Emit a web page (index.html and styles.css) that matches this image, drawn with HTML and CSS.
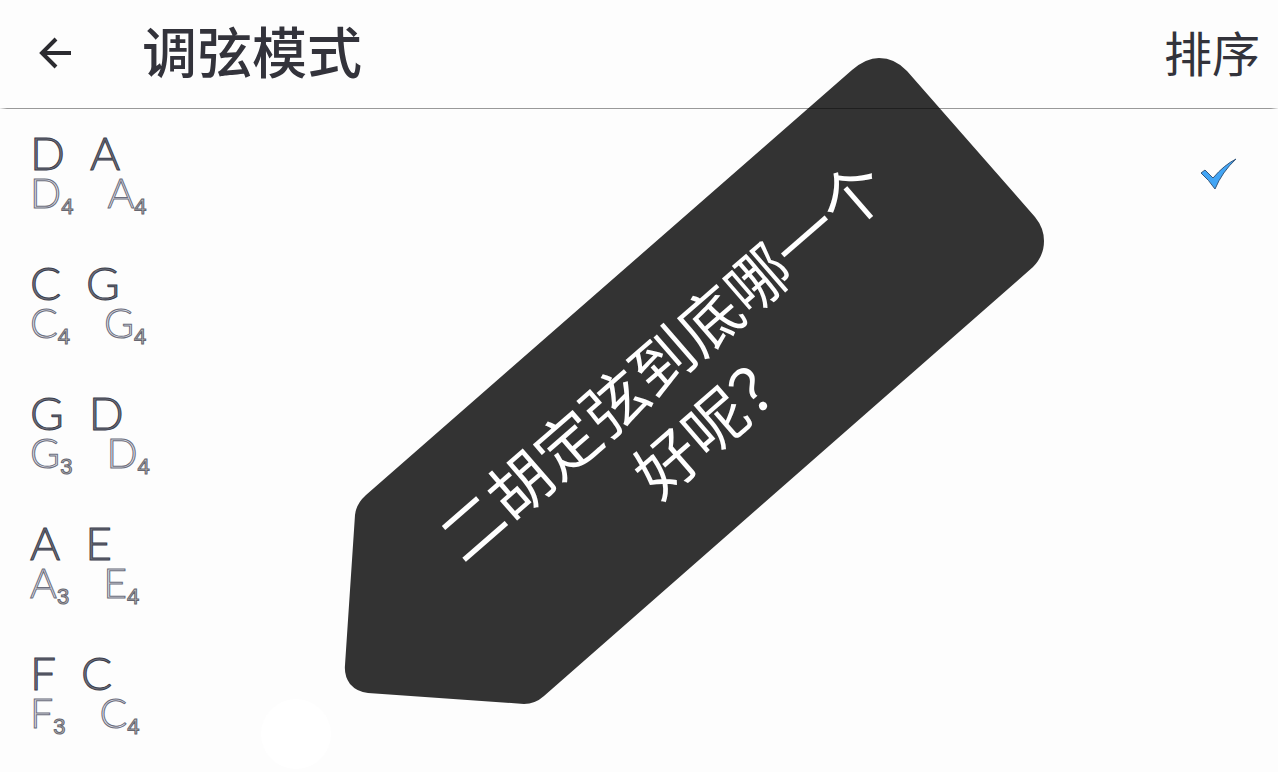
FILE: index.html
```
<!DOCTYPE html>
<html lang="zh-CN">
<head>
  <meta charset="UTF-8">
  <meta name="viewport" content="width=device-width, initial-scale=1">
  <title>调弦模式</title>
  <link rel="stylesheet" href="styles.css">
</head>
<body>

  <header class="topbar">
    <button class="back" type="button" aria-label="返回">
      <svg width="34" height="32" viewBox="0 0 34 32">
        <path d="M33 16H4M18 2L4 16L18 30" />
      </svg>
    </button>
    <h1>调弦模式</h1>
    <button class="sort" type="button">排序</button>
  </header>

  <main class="tunings">
    <label class="tuning">
      <span class="info">
        <span class="keys"><span>D</span><span>A</span></span>
        <span class="notes"><span>D<sub>4</sub></span><span>A<sub>4</sub></span></span>
      </span>
      <input type="radio" name="tuning" checked>
      <svg class="tick" width="38" height="34" viewBox="0 0 38 34">
        <path d="M1 16L5 13L13 21Q24 8 36 2Q22 15 15 32Q9 23 1 16Z" />
      </svg>
    </label>
    <label class="tuning">
      <span class="info">
        <span class="keys"><span>C</span><span>G</span></span>
        <span class="notes"><span>C<sub>4</sub></span><span>G<sub>4</sub></span></span>
      </span>
      <input type="radio" name="tuning">
    </label>
    <label class="tuning">
      <span class="info">
        <span class="keys"><span>G</span><span>D</span></span>
        <span class="notes"><span>G<sub>3</sub></span><span>D<sub>4</sub></span></span>
      </span>
      <input type="radio" name="tuning">
    </label>
    <label class="tuning">
      <span class="info">
        <span class="keys"><span>A</span><span>E</span></span>
        <span class="notes"><span>A<sub>3</sub></span><span>E<sub>4</sub></span></span>
      </span>
      <input type="radio" name="tuning">
    </label>
    <label class="tuning">
      <span class="info">
        <span class="keys"><span>F</span><span>C</span></span>
        <span class="notes"><span>F<sub>3</sub></span><span>C<sub>4</sub></span></span>
      </span>
      <input type="radio" name="tuning">
    </label>
  </main>

  <div class="dot"></div>

  <div class="callout">
    <svg width="702" height="650" viewBox="0 0 702 650">
      <path d="M22 439L508 14Q522 2 535 2Q551 2 563 15L691 161Q700 172 700 185Q700 200 689 211L200 640Q191 648 180 648L24 637Q13 636 6 628Q0 620 1 609L11 459Q12 448 22 439Z" />
    </svg>
    <p>二胡定弦到底哪一个<br>好呢？</p>
  </div>

</body>
</html>
```
FILE: styles.css
```
* { box-sizing: border-box; }
body {
  margin: 0;
  min-height: 100vh;
  position: relative;
  overflow: hidden;
  background: #fdfdfd;
  color: #33333b;
  font-family: "Noto Sans CJK SC", sans-serif;
}
button {
  padding: 0;
  border: none;
  background: none;
  color: inherit;
  font-family: inherit;
  cursor: pointer;
}

.topbar {
  display: flex;
  align-items: center;
  height: 109px;
  padding: 0 18px 2px 38px;
  border-bottom: 1px solid;
  border-image: linear-gradient(to right, transparent, #999 8px, #999 calc(100% - 8px), transparent) 1;
}
.back {
  display: flex;
  margin-right: 70px;
}
.back path {
  fill: none;
  stroke: #2b2b30;
  stroke-width: 4;
}
h1 {
  margin: 0;
  padding-bottom: 8px;
  font-size: 55px;
  font-weight: 500;
  line-height: 80px;
}
.sort {
  margin-left: auto;
  padding-bottom: 4px;
  font-size: 48px;
  line-height: 80px;
}

.tuning {
  display: flex;
  align-items: center;
  justify-content: space-between;
  height: 130px;
  padding: 0 40px 0 30px;
  cursor: pointer;
}
.tuning input {
  appearance: none;
  width: 0;
  margin: 0 0 0 auto;
}
.info {
  font-family: Lato, sans-serif;
  font-weight: 300;
}
.keys, .notes {
  display: flex;
  line-height: 40px;
}
.keys {
  gap: 25px;
  padding-top: 2px;
  color: #70737f;
  font-size: 46px;
  -webkit-text-stroke: 1px #3a3c4a;
}
.notes {
  gap: 34px;
  color: #e4e5ee;
  font-size: 41px;
  -webkit-text-stroke: 1px #6b6d7c;
}
sub {
  font: 22px/1 "Liberation Sans", sans-serif;
  vertical-align: -6px;
  color: #bbb;
  -webkit-text-stroke: 1px #666670;
}
.tick path {
  fill: #42a5f5;
  stroke: #34577c;
}

.dot {
  position: absolute;
  left: 261px;
  bottom: 3px;
  width: 70px;
  height: 70px;
  border-radius: 50%;
  background: #fff;
}

/* slanted speech label over the list */
.callout {
  position: absolute;
  left: 344px;
  top: 56px;
  display: grid;
  place-items: center;
}
.callout svg, .callout p { grid-area: 1 / 1; }
.callout path { fill: rgba(0, 0, 0, 0.8); }
.callout p {
  margin: 0;
  color: #fff;
  font-size: 63px;
  line-height: 80px;
  text-align: center;
  white-space: nowrap;
  transform: rotate(-41deg) translateX(-12px);
}
```
